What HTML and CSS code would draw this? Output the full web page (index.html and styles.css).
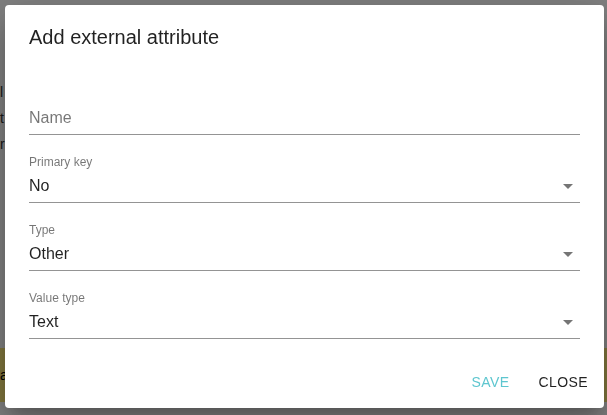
FILE: index.html
```html
<!DOCTYPE html>
<html lang="en">
<head>
<meta charset="utf-8">
<title>Add external attribute</title>
<link rel="stylesheet" href="styles.css">
</head>
<body>
<div class="page">
  <div class="page-main">
    <div class="page-row">l</div>
    <div class="page-row">t</div>
    <div class="page-row">r</div>
  </div>
  <div class="page-bar"><span class="page-bar-text">a</span></div>
</div>
<div class="backdrop">
  <div class="dialog" role="dialog">
    <h2 class="dialog-title">Add external attribute</h2>
    <div class="dialog-content">
      <div class="field">
        <div class="field-label"></div>
        <div class="field-input"><span class="field-value placeholder">Name</span></div>
      </div>
      <div class="field">
        <div class="field-label">Primary key</div>
        <div class="field-input"><span class="field-value">No</span>
          <svg class="arrow" viewBox="0 0 24 24" width="24" height="24"><path d="M7 10l5 5 5-5z"/></svg>
        </div>
      </div>
      <div class="field">
        <div class="field-label">Type</div>
        <div class="field-input"><span class="field-value">Other</span>
          <svg class="arrow" viewBox="0 0 24 24" width="24" height="24"><path d="M7 10l5 5 5-5z"/></svg>
        </div>
      </div>
      <div class="field">
        <div class="field-label">Value type</div>
        <div class="field-input"><span class="field-value">Text</span>
          <svg class="arrow" viewBox="0 0 24 24" width="24" height="24"><path d="M7 10l5 5 5-5z"/></svg>
        </div>
      </div>
    </div>
    <div class="dialog-actions">
      <button class="btn btn-save" type="button">Save</button>
      <button class="btn btn-close" type="button">Close</button>
    </div>
  </div>
</div>
</body>
</html>
```
FILE: styles.css
```css
* { box-sizing: border-box; }

html, body {
  margin: 0;
  padding: 0;
  width: 607px;
  height: 415px;
  overflow: hidden;
  background: #ffffff;
  font-family: "Liberation Sans", Arial, sans-serif;
}

.page {
  display: flex;
  flex-direction: column;
  height: 415px;
}

.page-main {
  height: 348px;
  padding-top: 82px;
  display: flex;
  flex-direction: column;
  gap: 6px;
  font-size: 14px;
  color: #333;
}

.page-row {
  line-height: 20px;
  padding-left: 0;
}

.page-bar {
  height: 54px;
  background: #ffea78;
  display: flex;
  align-items: center;
  font-size: 14px;
  color: #000;
}

.page-bar-text {
  padding-left: 0;
}

.backdrop {
  position: fixed;
  inset: 0;
  background: rgba(0, 0, 0, 0.5);
  display: flex;
  align-items: flex-start;
  padding: 5px 0 0 5px;
}

.dialog {
  width: 599px;
  height: 403px;
  background: #ffffff;
  border-radius: 4px;
  box-shadow: 0 11px 15px -7px rgba(0,0,0,0.2), 0 24px 38px 3px rgba(0,0,0,0.14), 0 9px 46px 8px rgba(0,0,0,0.12);
  display: flex;
  flex-direction: column;
  color: rgba(0, 0, 0, 0.87);
}

.dialog-title {
  margin: 0;
  padding: 16px 24px;
  font-size: 20px;
  line-height: 32px;
  font-weight: 400;
}

.dialog-content {
  padding: 18px 24px 17px;
  display: flex;
  flex-direction: column;
  gap: 20px;
}

.field {
  display: flex;
  flex-direction: column;
}

.field-label {
  height: 14px;
  line-height: 14px;
  margin-bottom: 1px;
  font-size: 12px;
  color: rgba(0, 0, 0, 0.54);
}

.field-input {
  display: flex;
  align-items: center;
  padding: 6px 0 7px;
  font-size: 16px;
  line-height: 19px;
  border-bottom: 1px solid #949494;
}

.field-value {
  flex: 1;
}

.placeholder {
  color: rgba(0, 0, 0, 0.54);
}

.arrow {
  margin: -2px 0 -3px;
  fill: rgba(0, 0, 0, 0.54);
  flex: none;
}

.dialog-actions {
  display: flex;
  justify-content: flex-end;
  gap: 8px;
  padding: 8px;
}

.btn {
  min-width: 64px;
  height: 36px;
  padding: 6px 8px;
  border: 0;
  background: transparent;
  font-family: "Liberation Sans", Arial, sans-serif;
  font-size: 14px;
  line-height: 25px;
  letter-spacing: 0.4px;
  text-transform: uppercase;
  border-radius: 4px;
  cursor: pointer;
}

.btn-save {
  color: #5ec6cf;
}

.btn-close {
  color: rgba(0, 0, 0, 0.87);
}
```
